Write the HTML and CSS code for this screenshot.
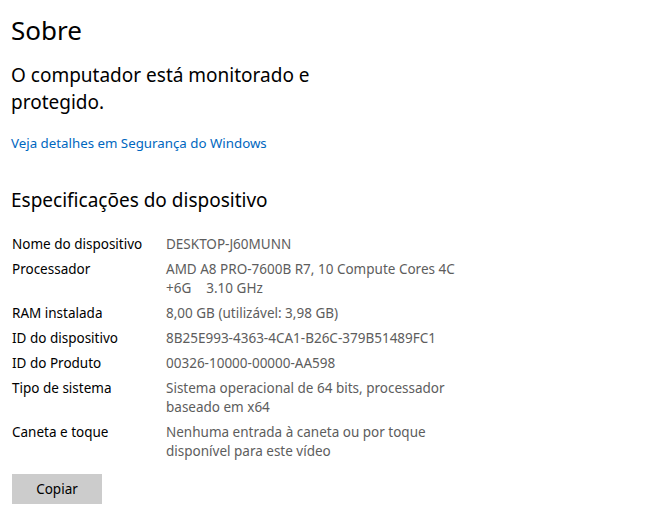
FILE: index.html
```html
<!DOCTYPE html>
<html lang="pt-BR">
<head>
    <meta charset="UTF-8">
    <title>Sobre</title>
    <link rel="stylesheet" href="styles.css">
</head>
<body>
    <div class="page">
        <h1>Sobre</h1>

        <p class="status">O computador está monitorado e protegido.</p>
        <a class="link" href="#">Veja detalhes em Segurança do Windows</a>

        <h2>Especificações do dispositivo</h2>

        <dl class="specs">
            <div class="row"><dt>Nome do dispositivo</dt><dd>DESKTOP-J60MUNN</dd></div>
            <div class="row"><dt>Processador</dt><dd>AMD A8 PRO-7600B R7, 10 Compute Cores 4C<br>+6G<span class="gap"></span>3.10 GHz</dd></div>
            <div class="row"><dt>RAM instalada</dt><dd>8,00 GB (utilizável: 3,98 GB)</dd></div>
            <div class="row"><dt>ID do dispositivo</dt><dd>8B25E993-4363-4CA1-B26C-379B51489FC1</dd></div>
            <div class="row"><dt>ID do Produto</dt><dd>00326-10000-00000-AA598</dd></div>
            <div class="row"><dt>Tipo de sistema</dt><dd>Sistema operacional de 64 bits, processador baseado em x64</dd></div>
            <div class="row"><dt>Caneta e toque</dt><dd>Nenhuma entrada à caneta ou por toque disponível para este vídeo</dd></div>
        </dl>

        <button class="copy">Copiar</button>
    </div>
</body>
</html>
```

FILE: styles.css
```css
body {
    margin: 0;
    background: #fff;
    color: #000;
    font-family: 'Noto Sans', 'Open Sans', sans-serif;
}

.page {
    padding: 12px 11px;
}

h1 {
    font-size: 26px;
    font-weight: 400;
    margin: 0;
    line-height: 36px;
}

.status {
    font-size: 19px;
    line-height: 27px;
    width: 310px;
    margin: 14px 0 0 0;
}

.link {
    display: block;
    margin-top: 18px;
    font-size: 13.3px;
    line-height: 19px;
    color: #0067c0;
    text-decoration: none;
}

h2 {
    font-size: 19px;
    font-weight: 400;
    line-height: 27px;
    margin: 34px 0 0 0;
}

/* Specs list */
.specs {
    margin: 21px 0 0 1px;
    font-size: 13.5px;
    line-height: 19px;
}

.row {
    display: flex;
    margin-bottom: 6px;
}

.row dt {
    width: 154px;
    flex-shrink: 0;
}

.row dd {
    margin: 0;
    width: 292px;
    color: #5d5d5d;
}

.gap {
    display: inline-block;
    width: 15px;
}

.copy {
    margin: 7px 0 0 1px;
    width: 90px;
    height: 30px;
    background: #cccccc;
    border: none;
    font-family: inherit;
    font-size: 13.5px;
    color: #000;
}
```
